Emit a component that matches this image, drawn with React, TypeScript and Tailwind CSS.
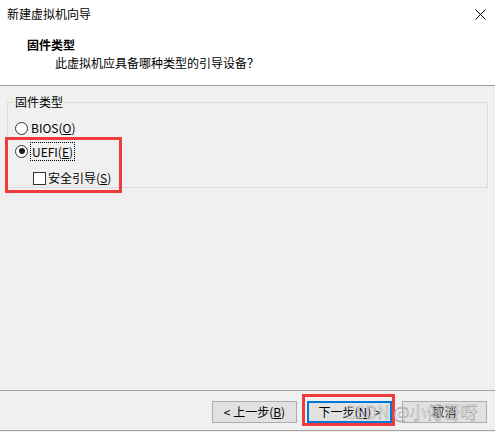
const Radio = ({ checked }: { checked?: boolean }) => (
  <span className="flex h-[13px] w-[13px] items-center justify-center rounded-full border border-[#333] bg-white">
    {checked && <span className="h-[6px] w-[6px] rounded-full bg-[#1a1a1a]" />}
  </span>
);

const Btn = ({ children, focused }: { children: React.ReactNode; focused?: boolean }) => (
  <button
    className={
      focused
        ? "flex h-[22px] w-[85px] items-center justify-center border-2 border-[#0078d7] bg-[#e1e1e1] text-[12px] text-black"
        : "flex h-[22px] w-[85px] items-center justify-center border border-[#adadad] bg-[#e1e1e1] text-[12px] text-black"
    }
  >
    {children}
  </button>
);

export default function App() {
  return (
    <div className="relative flex h-[432px] w-[495px] flex-col bg-[#f0f0f0] font-['Noto_Sans_CJK_SC','Liberation_Sans',sans-serif] text-[12px] leading-[16px] text-black">
      {/* header */}
      <div className="flex h-[86px] flex-col border-b border-[#a0a0a0] bg-white">
        <div className="flex h-[28px] items-center justify-between pl-[7px] pr-[9px]">
          <span>新建虚拟机向导</span>
          <svg width="11" height="11" viewBox="0 0 11 11">
            <path d="M0.5 0.5 L10.5 10.5 M10.5 0.5 L0.5 10.5" stroke="#000" strokeWidth="1" />
          </svg>
        </div>
        <div className="mt-[9px] pl-[27px] font-bold">固件类型</div>
        <div className="mt-[2px] pl-[55px]">此虚拟机应具备哪种类型的引导设备？</div>
      </div>

      {/* body */}
      <div className="flex-1">
        <fieldset className="mx-[7px] mt-[8px] border border-[#dcdcdc] px-[7px]">
          <legend className="ml-[-1px] px-[1px]">固件类型</legend>
          <div className="mt-[8px] flex h-[20px] items-center gap-[3px]">
            <Radio />
            <span>
              BIOS(<span className="underline">O</span>)
            </span>
          </div>
          <div className="mt-[3px] flex h-[20px] items-center gap-[2px]">
            <Radio checked />
            <span className="border border-dotted border-black px-[1px] leading-[17px]">
              UEFI(<span className="underline">E</span>)
            </span>
          </div>
          <div className="mt-[8px] ml-[18px] flex h-[18px] items-center gap-[2px]">
            <span className="h-[13px] w-[13px] border border-[#333] bg-white" />
            <span>
              安全引导(<span className="underline">S</span>)
            </span>
          </div>
        </fieldset>
      </div>

      {/* footer */}
      <div className="flex h-[42px] flex-col border-t border-[#a0a0a0]">
        <div className="mt-[10px] flex justify-end gap-[10px] pr-[8px]">
          <Btn>
            &lt; 上一步(<span className="underline">B</span>)
          </Btn>
          <Btn focused>
            下一步(<span className="underline">N</span>) &gt;
          </Btn>
          <Btn>取消</Btn>
        </div>
        <div className="mt-auto h-[2px] border-t border-[#a0a0a0] bg-[#f0f0f0]" />
      </div>

      {/* annotations */}
      <div className="absolute left-[5px] top-[137px] h-[56px] w-[117px] border-[3px] border-[#f03b3b]" />
      <div className="absolute left-[302px] top-[394px] h-[32px] w-[93px] border-[3px] border-[#f03b3b]" />
      <div className="pointer-events-none absolute left-[345px] top-[401px] text-[17px] leading-[22px] text-white/50 [-webkit-text-stroke:0.4px_#8a8a8a]">
        CSDN @小傅哥呀
      </div>
    </div>
  );
}
